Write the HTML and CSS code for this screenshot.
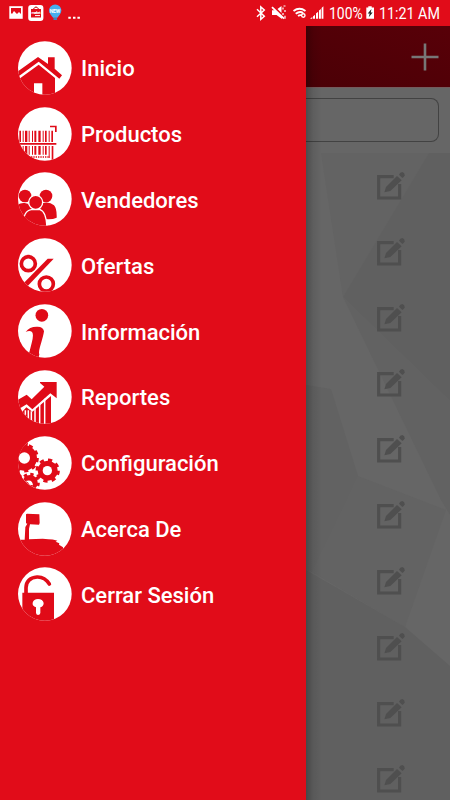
FILE: index.html
```html
<!DOCTYPE html>
<html lang="es">
<head>
<meta charset="utf-8">
<title>Menú</title>
<link rel="stylesheet" href="styles.css">
</head>
<body>
<svg class="defs" width="0" height="0">
  <defs>
    <clipPath id="disc"><circle cx="80.5" cy="81" r="80.5"/></clipPath>
    <symbol id="edit" viewBox="0 0 84 84">
      <path d="M50 14H5V78H68V36" fill="none" stroke="currentColor" stroke-width="9.5"/>
      <path d="M22 61L27 45L60 12L74 25L40 57Z" fill="currentColor"/>
      <path d="M66 8Q69 0 76 0Q84 3 83 10Q82 15 76 18Z" fill="currentColor"/>
    </symbol>
  </defs>
</svg>
<header class="status">
  <svg class="status-left" viewBox="0 0 120 26" width="120" height="26">
    <path d="M9.3 6.2h13.4v12.6H9.3z" fill="#fff"/><path d="M11 8h10v6l-2-2-2 2-3-3-2 3-1-1z" fill="#e10c19"/>
    <rect x="28.2" y="5" width="15.2" height="16" rx="3" fill="#fff"/>
    <path d="M31 9h10v8.5H31z" fill="#e10c19"/><path d="M33.5 9q2.5-4 5 0" fill="none" stroke="#b00" stroke-width="1"/>
    <text x="31.5" y="14.3" class="micro" textLength="9">market</text><path d="M35 15.6h5" stroke="#fff"/>
    <path d="M49 10.5a6.2 6 0 0 1 12.4 0c0 3-2.7 5.3-4 7.2h-4.3c-1.3-1.9-4.1-4.2-4.1-7.2z" fill="#45aeee"/>
    <path d="M53.5 18h3.5v2h-3.5z" fill="#4680b8"/><text x="49.7" y="12.5" class="micro new" textLength="10.5">NEW</text>
    <path d="M68.3 16.7h2.5v2h-2.5zM73 16.7h2.5v2H73zM77.4 16.7h2.5v2h-2.5z" fill="#fff"/>
  </svg>
  <div class="status-right">
    <svg viewBox="250 0 78 26" width="78" height="26">
      <g fill="none" stroke="#fff" stroke-width="1.5">
        <path d="M257 9.3l7.3 7-3.5 3V7l3.5 3-7.3 6.7"/>
        <path d="M272 7.2l12 11.5" stroke-width="1.8"/>
        <path d="M283 7.5v2M285 10v2M283 13v2M285 15.8v3M283.5 6h2" stroke-width="1.2"/>
        <path d="M293.5 11q6-4.5 12 0M295.7 13.7q4-3 7.5-.8M298 16q2-1.4 3.5-.7" stroke-width="1.8"/>
        <circle cx="303.3" cy="15.5" r="1.7" stroke-width="1.4"/>
      </g>
      <path d="M272 10.2h3l7 7V19l-5.5-4H272zM277.5 9l4-3v7z" fill="#fff"/>
      <path d="M310 18.8l2.3-1.8v1.8zM313 16.4l2-1.7v4.1h-2zM316 13.6l2.1-1.9v7.1H316zM319 10.6l1.9-1.7v9.9H319zM321.6 8l1.8-1.7v12.5h-1.8z" fill="#fff"/>
    </svg>
    <span class="clock percent">100%</span>
    <svg viewBox="365 0 10 26" width="10" height="26"><path d="M366.3 7.5h2v-1.3h3.4v1.3h2.3v11.3h-7.7z" fill="#fff"/><path d="M371.5 9l-3.8 4.6h2l-1 3.7 4-4.8h-2z" fill="#222"/></svg>
    <span class="clock time">11:21 AM</span>
  </div>
</header>
<main class="screen">
  <nav class="drawer">
    <a class="item"><svg class="icon" viewBox="0 0 161 162"><circle class="disc" cx="80.5" cy="81" r="80.5"/><g clip-path="url(#disc)">
      <path d="M0 91L60 48L90 69V49H110V83L132 103L124 113L62 62L0 107Z"/><path d="M0 116L62 71L111 111V162H73V127H48V162H0Z"/></g></svg><span>Inicio</span></a>
    <a class="item"><svg class="icon" viewBox="0 0 161 162"><circle class="disc" cx="80.5" cy="81" r="80.5"/><g clip-path="url(#disc)">
      <path d="M4 71h5v34H4zM14 71h3v34h-3zM21 71h7v34h-7zM32 71h3v34h-3zM42 71h3v34h-3zM49 71h6v34h-6zM61 71h7v34h-7zM74 71h3v34h-3zM81 71h5v34h-5zM92 71h3v34h-3zM100 71h5v34h-5zM0 108h115v5H0zM14 117h3v26h-3zM21 117h7v26h-7zM32 117h3v26h-3zM42 117h3v26h-3zM49 117h6v26h-6zM61 117h7v26h-7zM74 117h3v26h-3zM81 117h5v26h-5zM92 117h3v36h-3zM101 117h5v42h-5zM96 56h20v19h-5V61H96z"/>
      <path d="M18 150H96" fill="none" stroke="#e00b18" stroke-width="5" stroke-dasharray="4 3"/></g></svg><span>Productos</span></a>
    <a class="item"><svg class="icon" viewBox="0 0 161 162"><circle class="disc" cx="80.5" cy="81" r="80.5"/><g clip-path="url(#disc)">
      <circle cx="21" cy="72" r="19"/><circle cx="84" cy="72" r="19"/><path d="M-8 140V108Q0 91 20 93Q40 95 44 118V145ZM62 98Q90 84 108 100Q117 110 116 137Q103 143 80 141Z"/>
      <g stroke="#fff" stroke-width="4"><path d="M14 170Q14 116 40 113H66Q85 118 87 170Z"/><circle cx="53" cy="91" r="21"/></g></g></svg><span>Vendedores</span></a>
    <a class="item"><svg class="icon" viewBox="0 0 161 162"><circle class="disc" cx="80.5" cy="81" r="80.5"/><g clip-path="url(#disc)">
      <g fill="none" stroke="#e00b18" stroke-width="11"><circle cx="31" cy="77" r="21"/><circle cx="85" cy="138" r="21"/></g><path d="M89 62H107L27 146L18 134Z"/></g></svg><span>Ofertas</span></a>
    <a class="item"><svg class="icon" viewBox="0 0 161 162"><circle class="disc" cx="80.5" cy="81" r="80.5"/><g clip-path="url(#disc)">
      <circle cx="71.5" cy="34" r="19"/><path d="M23 84Q34 68 56 68Q76 67 78 82Q76 96 66 128Q61 146 64 151L60 170L28 162Q36 140 41 117Q48 91 42 84Q35 78 23 84Z"/></g></svg><span>Información</span></a>
    <a class="item"><svg class="icon" viewBox="0 0 161 162"><circle class="disc" cx="80.5" cy="81" r="80.5"/><g clip-path="url(#disc)">
      <path d="M0 89L26 74L41 88L79 50L66 39V36H116V85L97 70L43 118L26 103L6 115L0 118Z"/>
      <path d="M10 128L25 112L43 125L99 78V162H30V148H22V132L16 136Z"/>
      <path d="M80 86V162M65 100V162M51 113V162M40 124V162M31 121V150M22 121V134" fill="none" stroke="#fff" stroke-width="4.5"/></g></svg><span>Reportes</span></a>
    <a class="item"><svg class="icon" viewBox="0 0 161 162"><circle class="disc" cx="80.5" cy="81" r="80.5"/><g clip-path="url(#disc)">
      <path d="M0 20H30L26 45L8 50H0Z"/>
      <circle cx="19" cy="66" r="38"/><circle class="teeth" cx="19" cy="66" r="39" stroke-dasharray="12.25"/><circle cx="19" cy="66" r="17" fill="#fff"/>
      <path d="M0 118H11V162H0Z"/>
      <circle cx="36" cy="140" r="29" fill="#fff"/><circle cx="36" cy="140" r="23"/><circle class="teeth" cx="36" cy="140" r="25" stroke-dasharray="9.817"/><path d="M23 135Q43 128 45 148L34 146Q32 138 23 135Z" fill="#fff"/>
      <circle cx="89" cy="104" r="34" fill="#fff"/><circle cx="89" cy="104" r="30"/><circle class="teeth" cx="89" cy="104" r="32" stroke-dasharray="12.566"/><circle cx="88" cy="104" r="14" fill="#fff"/></g></svg><span>Configuración</span></a>
    <a class="item"><svg class="icon" viewBox="0 0 161 162"><circle class="disc" cx="80.5" cy="81" r="80.5"/><g clip-path="url(#disc)">
      <path d="M27 35L64 37L65 63L63 68L36 67L33 80V112L74 110Q112 112 118 116L113 119L124 124L123 128L135 136V162H0V113L20 113L22 75L28 65L24 64V37Z"/></g></svg><span>Acerca De</span></a>
    <a class="item"><svg class="icon" viewBox="0 0 161 162"><circle class="disc" cx="80.5" cy="81" r="80.5"/><g clip-path="url(#disc)">
      <path d="M13 77H108V162H13Z"/><path d="M24 80V62Q25 33 57 30Q80 29 94 51" fill="none" stroke="#e00b18" stroke-width="11" stroke-linecap="round"/><path d="M54 121Q42 116 44 107Q47 96 60 96Q74 96 77 108Q77 118 67 121V138Q66 144 60 144Q55 144 54 138Z" fill="#fff"/></g></svg><span>Cerrar Sesión</span></a>
  </nav>
  <section class="page">
    <div class="toolbar"><svg viewBox="0 0 28 28" width="28" height="28"><path d="M14 .5V27.5M.5 14H27.5" stroke="#777" stroke-width="2.6"/></svg></div>
    <div class="search"><div class="field"></div></div>
    <div class="list">
      <svg class="facets" viewBox="306 153 144 647" preserveAspectRatio="none">
        <path fill="#666" d="M306 153H450V800H306z"/>
        <path fill="#636363" d="M321 153H429L343 297Z"/>
        <path fill="#606060" d="M429 153H450V401L343 297Z"/>
        <path fill="#626262" d="M343 297L450 401V515L441 500Z"/>
        <path fill="#626262" d="M306 385L331 389L358 476L347 500L312 572L306 570Z"/>
        <path fill="#636363" d="M358 476L446 510L405 627L312 572Z"/>
        <path fill="#606060" d="M306 570L405 627L450 666V800H306Z"/>
      </svg>
      <div class="row"><svg class="edit"><use href="#edit"/></svg></div>
      <div class="row"><svg class="edit"><use href="#edit"/></svg></div>
      <div class="row"><svg class="edit"><use href="#edit"/></svg></div>
      <div class="row"><svg class="edit"><use href="#edit"/></svg></div>
      <div class="row"><svg class="edit"><use href="#edit"/></svg></div>
      <div class="row"><svg class="edit"><use href="#edit"/></svg></div>
      <div class="row"><svg class="edit"><use href="#edit"/></svg></div>
      <div class="row"><svg class="edit"><use href="#edit"/></svg></div>
      <div class="row"><svg class="edit"><use href="#edit"/></svg></div>
      <div class="row"><svg class="edit"><use href="#edit"/></svg></div>
    </div>
    <div class="shade"></div>
  </section>
</main>
</body>
</html>
```
FILE: styles.css
```css
* { box-sizing: border-box; }
body {
  margin: 0;
  width: 450px;
  height: 800px;
  overflow: hidden;
  background: #e10c19;
  font-family: Roboto, sans-serif;
}
svg { display: block; }
.defs { position: absolute; }
.status {
  display: flex;
  justify-content: space-between;
  height: 26px;
}
.status-right { display: flex; width: 200px; }
.status-right svg { flex: none; }
.clock {
  flex: none;
  color: #fff;
  font-size: 17px;
  line-height: 26px;
  white-space: nowrap;
  transform-origin: 0 50%;
}
.percent { width: 36.4px; margin-left: .6px; transform: scaleX(.82); }
.time { margin-left: 4px; width: 71px; transform: scaleX(.84); }
.micro { font: 700 4px Roboto, sans-serif; fill: #fff; }
.new { font-size: 5px; }
.screen { display: flex; height: 774px; }
.drawer {
  width: 306px;
  flex: none;
  padding-top: 8.8px;
  background: #e10c19;
}
.item {
  display: flex;
  align-items: center;
  height: 65.83px;
  padding-left: 18px;
  gap: 9.3px;
  color: #fff;
  font-size: 22px;
  font-weight: 500;
  line-height: 26px;
  white-space: nowrap;
}
.icon { width: 53.7px; height: 54px; flex: none; fill: #e00b18; }
.item span { padding-top: 3.2px; }
.disc { fill: #fff; }
.teeth { fill: none; stroke: #e00b18; stroke-width: 9; }
.page {
  position: relative;
  display: flex;
  flex-direction: column;
  flex: 1;
  overflow: hidden;
  background: #666;
}
.toolbar {
  display: flex;
  align-items: center;
  justify-content: flex-end;
  height: 61.5px;
  flex: none;
  padding: 1px 11px 0 0;
  background: linear-gradient(20deg, #4b0006, #580008);
  border-bottom: 1px solid #745b5d;
}
.search { height: 65.5px; flex: none; padding: 10.5px 11px 0 0; background: #666; }
.field {
  height: 44px;
  border: 1px solid #424242;
  border-left: 0;
  border-radius: 0 8px 8px 0;
}
.list { position: relative; height: 647px; flex: none; overflow: hidden; }
.facets { position: absolute; inset: 0; width: 144px; height: 647px; }
.row {
  position: relative;
  display: flex;
  align-items: center;
  justify-content: flex-end;
  height: 65.85px;
  padding-right: 45px;
}
.edit { width: 28px; height: 28px; color: #4f4f4f; overflow: visible; }
.shade {
  position: absolute;
  inset: 0 auto 0 0;
  width: 16px;
  background: linear-gradient(90deg, rgba(0,0,0,.25), rgba(0,0,0,.08) 45%, transparent);
}
```
